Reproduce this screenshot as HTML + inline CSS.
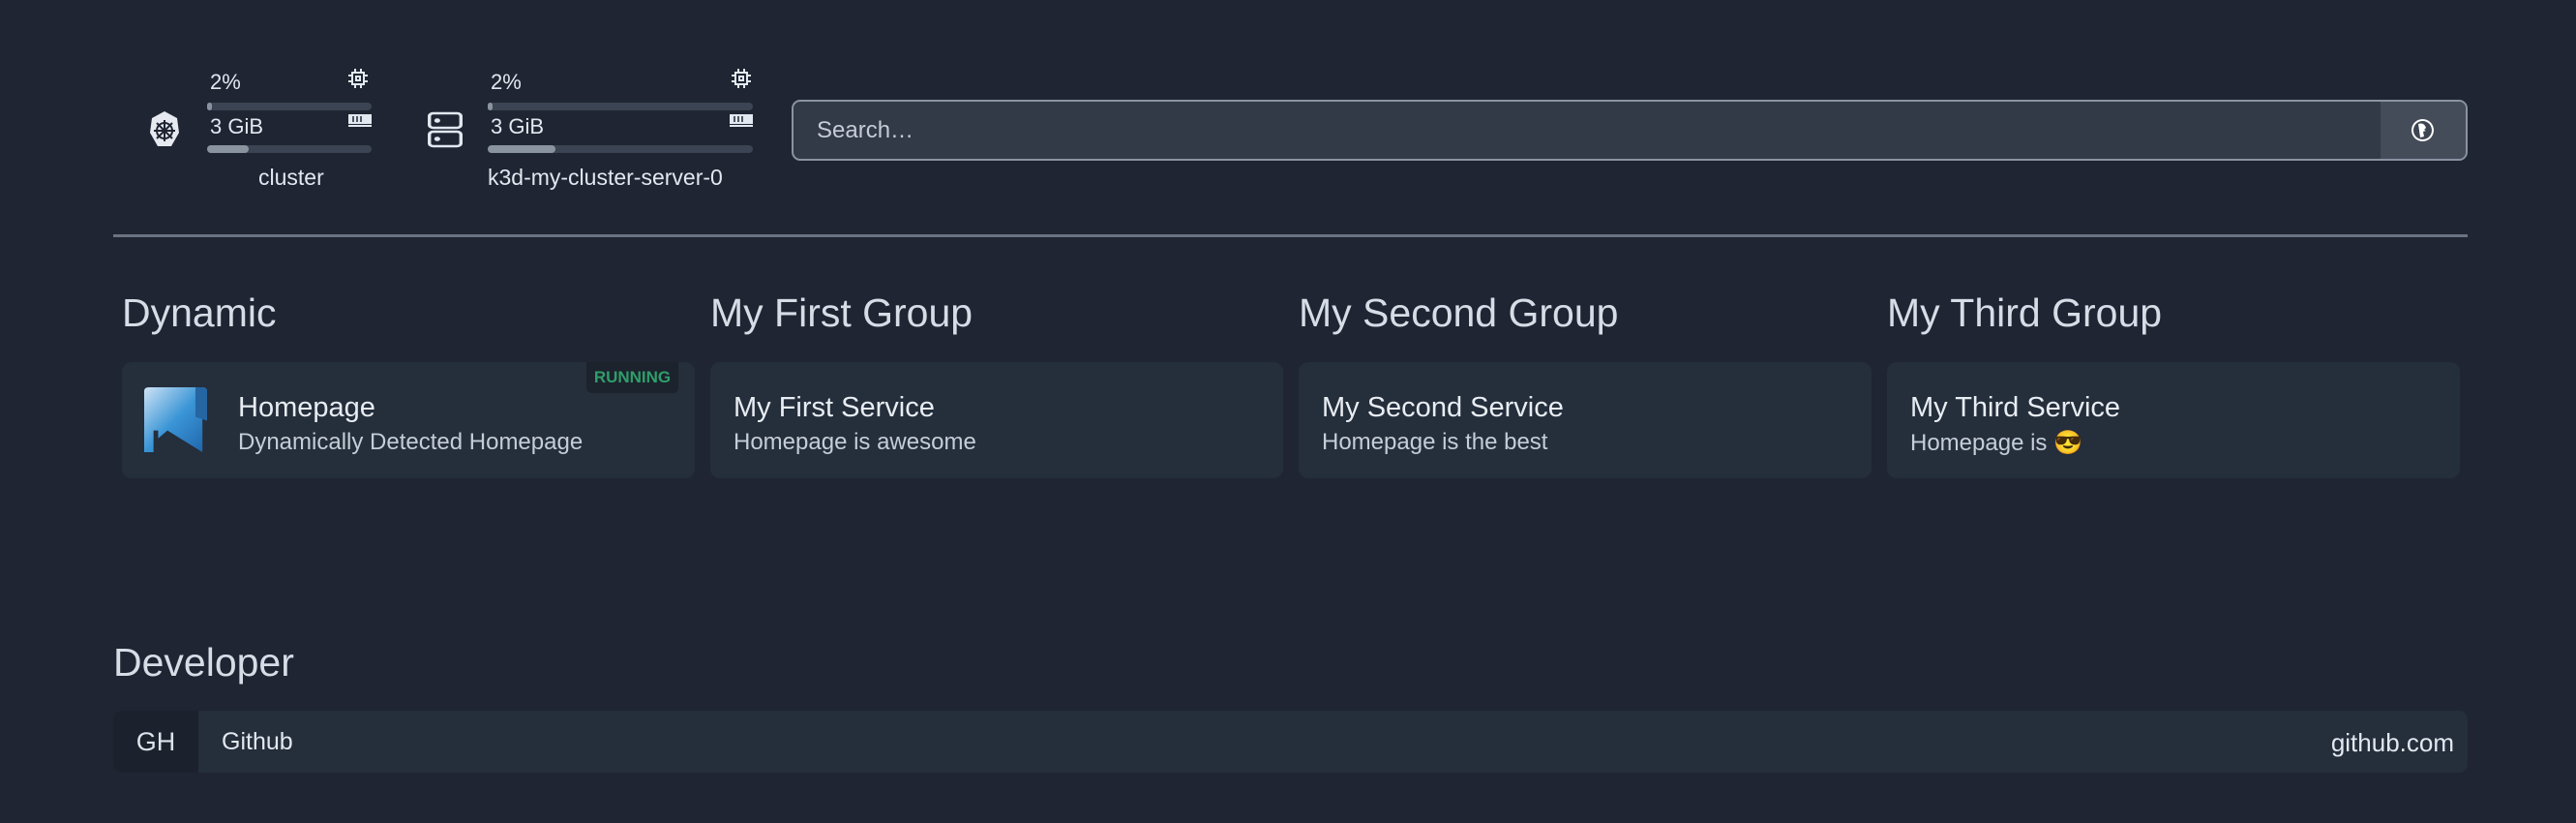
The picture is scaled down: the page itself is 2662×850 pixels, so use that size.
<!DOCTYPE html>
<html><head><meta charset="utf-8"><style>
*{margin:0;padding:0;box-sizing:border-box}
body{width:2662px;height:850px;background:#1f2532;font-family:"Liberation Sans",sans-serif;color:#e2e8f0;position:relative;overflow:hidden}
.a{position:absolute;white-space:nowrap}
.bar{position:absolute;height:8px;border-radius:4px;background:#3b4452}
.bar i{display:block;height:8px;border-radius:4px;background:#8a93a0}
.t{font-size:22px;color:#e2e8f0}
.h{font-size:41px;color:#d5dde6}
.card{position:absolute;top:374px;width:592px;height:120px;background:#252e3b;border-radius:10px}
.ct{position:absolute;font-size:29px;color:#e8edf3;top:31px}
.cs{position:absolute;font-size:24px;color:#c5cdd7;top:69px}
</style></head><body>
<svg class="a" style="left:150px;top:114px" width="40" height="42" viewBox="0 0 32 42"><polygon points="16,1 29,8 31,23 23,37 9,37 1,23 3,8" fill="#e6eaf0"/><circle cx="16" cy="21" r="8" fill="none" stroke="#1f2532" stroke-width="2"/><g stroke="#1f2532" stroke-width="2"><line x1="16" y1="10" x2="16" y2="32"/><line x1="5" y1="21" x2="27" y2="21"/><line x1="8" y1="13" x2="24" y2="29"/><line x1="24" y1="13" x2="8" y2="29"/></g></svg>
<div class="a t" style="left:217px;top:72px">2%</div>
<svg class="a" style="left:360px;top:70px" width="20" height="22" viewBox="0 0 20 22" fill="none" stroke="#e2e8f0" stroke-width="2"><rect x="4" y="5" width="12" height="12"/><rect x="8" y="9" width="4" height="4"/><path d="M7 1v4M13 1v4M7 17v4M13 17v4M0 8h4M0 14h4M16 8h4M16 14h4"/></svg>
<div class="bar" style="left:214px;top:106px;width:170px"><i style="width:5px"></i></div>
<div class="a t" style="left:217px;top:118px">3 GiB</div>
<svg class="a" style="left:360px;top:118px" width="24" height="14"><rect x="0" y="0" width="24" height="10" fill="#e2e8f0"/><path d="M5 2v6M9 2v6M13 2v6" stroke="#1f2532" stroke-width="1.5"/><rect x="0" y="11" width="24" height="2" fill="#e2e8f0"/></svg>
<div class="bar" style="left:214px;top:150px;width:170px"><i style="width:43px"></i></div>
<div class="a t" style="left:267px;top:170px;font-size:23px">cluster</div>
<svg class="a" style="left:441px;top:115px" width="38" height="38" viewBox="0 0 28 38" preserveAspectRatio="none" fill="none" stroke="#e2e8f0" stroke-width="2.5"><rect x="2" y="2" width="24" height="15" rx="3"/><rect x="2" y="21" width="24" height="15" rx="3"/><circle cx="8" cy="9.5" r="1" fill="#e2e8f0"/><circle cx="8" cy="28.5" r="1" fill="#e2e8f0"/></svg>
<div class="a t" style="left:507px;top:72px">2%</div>
<svg class="a" style="left:756px;top:70px" width="20" height="22" viewBox="0 0 20 22" fill="none" stroke="#e2e8f0" stroke-width="2"><rect x="4" y="5" width="12" height="12"/><rect x="8" y="9" width="4" height="4"/><path d="M7 1v4M13 1v4M7 17v4M13 17v4M0 8h4M0 14h4M16 8h4M16 14h4"/></svg>
<div class="bar" style="left:504px;top:106px;width:274px"><i style="width:5px"></i></div>
<div class="a t" style="left:507px;top:118px">3 GiB</div>
<svg class="a" style="left:754px;top:118px" width="24" height="14"><rect x="0" y="0" width="24" height="10" fill="#e2e8f0"/><path d="M5 2v6M9 2v6M13 2v6" stroke="#1f2532" stroke-width="1.5"/><rect x="0" y="11" width="24" height="2" fill="#e2e8f0"/></svg>
<div class="bar" style="left:504px;top:150px;width:274px"><i style="width:70px"></i></div>
<div class="a t" style="left:504px;top:170px;font-size:23px">k3d-my-cluster-server-0</div>
<div class="a" style="left:818px;top:103px;width:1732px;height:63px;border:2px solid #8a93a2;border-radius:9px;background:#323947;overflow:hidden">
<div class="a" style="left:24px;top:16px;font-size:24px;color:#c5ccd6">Search…</div>
<div class="a" style="right:0;top:0;width:88px;height:59px;background:#454c59"></div>
<svg class="a" style="right:32px;top:17px" width="25" height="25" viewBox="0 0 25 25"><circle cx="12.5" cy="12.5" r="11.5" fill="#fff"/><circle cx="12.5" cy="12.5" r="9.5" fill="#3d4452"/><path d="M8 6q6-2 8 4l-2 2 2 1-3 1 1 5-4 1z" fill="#fff"/></svg>
</div>
<div class="a" style="left:117px;top:242px;width:2433px;height:3px;background:#6b7383"></div>
<div class="a h" style="left:126px;top:300px">Dynamic</div>
<div class="a h" style="left:734px;top:300px">My First Group</div>
<div class="a h" style="left:1342px;top:300px">My Second Group</div>
<div class="a h" style="left:1950px;top:300px">My Third Group</div>
<div class="card" style="left:126px">
<svg class="a" style="left:23px;top:26px" width="65" height="67" viewBox="0 0 54 66" preserveAspectRatio="none"><defs><linearGradient id="g" x1="0" y1="0" x2="1" y2="1"><stop offset="0" stop-color="#cfe3f5"/><stop offset=".5" stop-color="#3a95d6"/><stop offset="1" stop-color="#1d63a8"/></linearGradient></defs><path d="M0 4q0-4 4-4h46q4 0 4 4v30l-4-2v34L20 44 12 52V44H8V66H0z" fill="url(#g)"/><path d="M44 0h6q4 0 4 4v30l-10-4z" fill="#2566a2"/></svg>
<div class="ct" style="left:120px">Homepage</div>
<div class="cs" style="left:120px">Dynamically Detected Homepage</div>
<div class="a" style="left:480px;top:0;width:95px;height:32px;background:#1c232d;border-radius:0 0 6px 6px;color:#2f9e6a;font-size:17px;font-weight:bold;text-align:center;line-height:32px">RUNNING</div>
</div>
<div class="card" style="left:734px"><div class="ct" style="left:24px">My First Service</div><div class="cs" style="left:24px">Homepage is awesome</div></div>
<div class="card" style="left:1342px"><div class="ct" style="left:24px">My Second Service</div><div class="cs" style="left:24px">Homepage is the best</div></div>
<div class="card" style="left:1950px"><div class="ct" style="left:24px">My Third Service</div><div class="cs" style="left:24px">Homepage is 😎</div></div>
<div class="a h" style="left:117px;top:661px">Developer</div>
<div class="a" style="left:117px;top:734px;width:2433px;height:64px;border-radius:9px;background:#252e3b;overflow:hidden">
<div class="a" style="left:0;top:0;width:88px;height:64px;background:#1c222d;font-size:27px;color:#dde3ea;text-align:center;line-height:64px">GH</div>
<div class="a" style="left:112px;top:18px;font-size:25px;color:#e2e8f0">Github</div>
<div class="a" style="right:14px;top:18px;font-size:26px;color:#e2e8f0">github.com</div>
</div>
</body></html>
